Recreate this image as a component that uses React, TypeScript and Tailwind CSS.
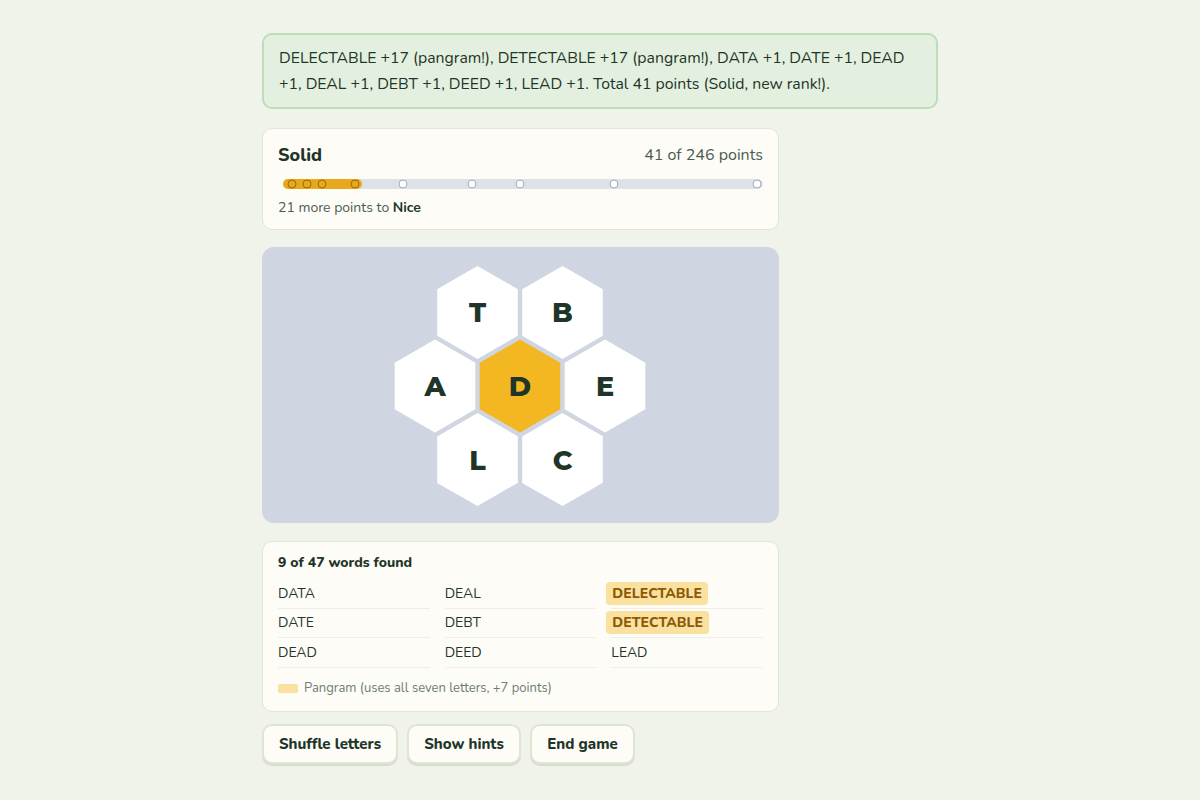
import React from 'react';

const font = { fontFamily: '"Nunito", "Lato", "Noto Sans", sans-serif' };

const words = [
  ['DATA', 'DEAL', 'DELECTABLE'],
  ['DATE', 'DEBT', 'DETECTABLE'],
  ['DEAD', 'DEED', 'LEAD'],
];
const pangrams = ['DELECTABLE', 'DETECTABLE'];

// rank markers along the progress bar, in px from its left edge
const filledDots = [9, 24, 39, 72];
const emptyDots = [120, 189, 237, 331, 474];

const buttons = [
  { label: 'Shuffle letters', w: 'w-[136px]' },
  { label: 'Show hints', w: 'w-[114px]' },
  { label: 'End game', w: 'w-[105px]' },
];

const hexes = [
  { l: 'T', dx: -42.5, dy: -73.6 },
  { l: 'B', dx: 42.5, dy: -73.6 },
  { l: 'A', dx: -85, dy: 0 },
  { l: 'D', dx: 0, dy: 0, center: true },
  { l: 'E', dx: 85, dy: 0 },
  { l: 'L', dx: -42.5, dy: 73.6 },
  { l: 'C', dx: 42.5, dy: 73.6 },
];

const hexPoints = (cx: number, cy: number, r: number) =>
  Array.from({ length: 6 }, (_, i) => {
    const a = (Math.PI / 3) * i - Math.PI / 2;
    return `${(cx + r * Math.cos(a)).toFixed(1)},${(cy + r * Math.sin(a)).toFixed(1)}`;
  }).join(' ');

function Honeycomb() {
  const cx = 258;
  const cy = 139;
  return (
    <svg viewBox="0 0 517 276" className="block h-[276px] w-[517px]">
      {hexes.map(h => (
        <g key={h.l}>
          <polygon
            points={hexPoints(cx + h.dx, cy + h.dy, 46.5)}
            fill={h.center ? '#f3b722' : '#ffffff'}
          />
          <text
            x={cx + h.dx}
            y={cy + h.dy + 10}
            textAnchor="middle"
            fontSize="27"
            fontWeight="800"
            fill="#1f3529"
            style={{ fontFamily: '"Montserrat", "Inter", "Lato", sans-serif' }}
          >
            {h.l}
          </text>
        </g>
      ))}
    </svg>
  );
}

export default function App() {
  return (
    <div className="min-h-[800px] w-full bg-[#f0f3ea] text-[#1f3529]" style={font}>
      <div className="mx-auto w-[676px] pt-[33px]">
        <div className="rounded-[10px] border-2 border-[#bddcb8] bg-[#e3f0df] px-[15px] py-[10px] text-[15.8px] leading-[26px]">
          DELECTABLE +17 (pangram!), DETECTABLE +17 (pangram!), DATA +1, DATE +1, DEAD +1, DEAL +1, DEBT +1, DEED +1, LEAD +1. Total 41 points (Solid, new rank!).
        </div>

        <div className="mt-[19px] w-[517px] rounded-[10px] border border-[#e3e5d7] bg-[#fdfcf7] px-[15px] pb-[11px] pt-[13px]">
          <div className="flex items-center justify-between">
            <span className="text-[18px] font-extrabold leading-[26px]">Solid</span>
            <span className="text-[16px] text-[#4b5b52]">41 of 246 points</span>
          </div>
          <div className="relative ml-[5px] mt-[11px] h-[10px] rounded-full bg-[#dde1ea]">
            <div className="absolute left-0 top-0 h-full w-[79px] rounded-full bg-[#e8a81e]" />
            {filledDots.map(p => (
              <span
                key={p}
                className="absolute top-1/2 h-[9px] w-[9px] -translate-x-1/2 -translate-y-1/2 rounded-full border-[1.5px] border-[#9a6a00] bg-[#e8a81e]"
                style={{ left: p }}
              />
            ))}
            {emptyDots.map(p => (
              <span
                key={p}
                className="absolute top-1/2 h-[9px] w-[9px] -translate-x-1/2 -translate-y-1/2 rounded-full border-[1.5px] border-[#a3abb6] bg-white"
                style={{ left: p }}
              />
            ))}
          </div>
          <div className="mt-[8px] text-[14px] text-[#4b5b52]">
            21 more points to <b className="font-bold text-[#1f3529]">Nice</b>
          </div>
        </div>

        <div className="mt-[17px] w-[517px] overflow-hidden rounded-[12px] bg-[#d0d6e1]">
          <Honeycomb />
        </div>

        <div className="mt-[18px] w-[517px] rounded-[10px] border border-[#e3e5d7] bg-[#fdfcf7] px-[15px] pb-[13px] pt-[11px]">
          <div className="text-[14px] font-extrabold leading-[20px]">9 of 47 words found</div>
          <div className="mt-[6px] grid grid-cols-3 gap-x-[15px]">
            {words.map(row =>
              row.map(w => (
                <div key={w} className="flex h-[29.5px] items-center border-b border-[#eeeee4]">
                  {pangrams.includes(w) ? (
                    <span className="-ml-[5px] rounded-[4px] bg-[#fbe1a0] px-[6px] py-[1px] text-[14px] font-extrabold text-[#8a5a05]">
                      {w}
                    </span>
                  ) : (
                    <span className="text-[14px]">{w}</span>
                  )}
                </div>
              ))
            )}
          </div>
          <div className="mt-[11px] flex items-center gap-[6px] text-[13px] text-[#6f7c74]">
            <span className="inline-block h-[9px] w-[20px] rounded-[2px] bg-[#fbe1a0]" />
            Pangram (uses all seven letters, +7 points)
          </div>
        </div>

        <div className="mt-[12px] flex gap-[9px]">
          {buttons.map(b => (
            <button
              key={b.label}
              className={`${b.w} h-[40px] rounded-[10px] border-2 border-[#e0e4d5] bg-[#fdfcf7] text-[15px] font-extrabold text-[#1f3529] shadow-[0_2px_0_#d8dccb]`}
            >
              {b.label}
            </button>
          ))}
        </div>
      </div>
    </div>
  );
}
